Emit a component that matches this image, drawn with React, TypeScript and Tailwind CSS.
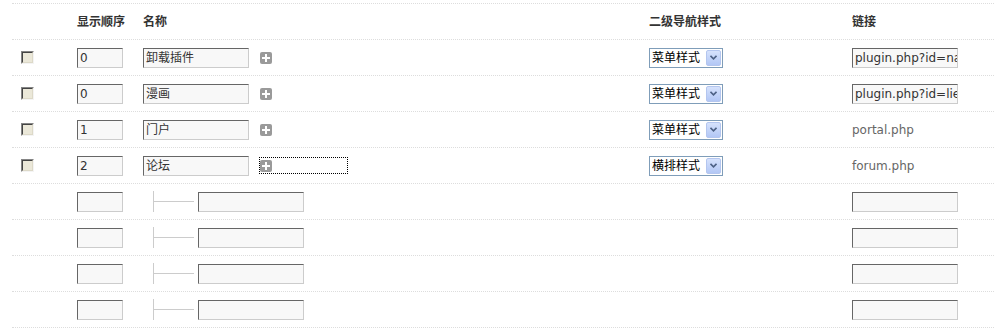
const font = "font-['DejaVu_Sans','Noto_Sans_CJK_SC',sans-serif]";

type Item = { order: string; name: string; style: string; link: string; editable: boolean; focus?: boolean };

const items: Item[] = [
  { order: "0", name: "卸载插件", style: "菜单样式", link: "plugin.php?id=nav_manage", editable: true },
  { order: "0", name: "漫画", style: "菜单样式", link: "plugin.php?id=liemanhua", editable: true },
  { order: "1", name: "门户", style: "菜单样式", link: "portal.php", editable: false },
  { order: "2", name: "论坛", style: "横排样式", link: "forum.php", editable: false, focus: true },
];

const cols = "grid grid-cols-[65px_66px_506px_203px_1fr] items-center";

function Field({ value = "", w }: { value?: string; w: string }) {
  return (
    <div
      className={`${w} h-[20px] overflow-hidden whitespace-nowrap border border-t-[#666] border-l-[#666] border-b-[#ccc] border-r-[#ccc] bg-[#f8f8f8] pl-[2px] text-[12px] leading-[18px] text-[#333]`}
    >
      {value}
    </div>
  );
}

function Checkbox() {
  return (
    <div className="ml-[9px] size-[13px] border border-t-[#858585] border-l-[#858585] border-b-[#f4f4f4] border-r-[#f4f4f4]">
      <div className="size-full border border-t-[#444] border-l-[#444] border-b-[#ddd9c8] border-r-[#ddd9c8] bg-[#ebe8d9]" />
    </div>
  );
}

function Plus() {
  return (
    <span className="relative inline-block size-[12px] rounded-[2px] bg-[#9a9a9a]">
      <span className="absolute left-[5px] top-[2px] h-[8px] w-[2px] bg-white" />
      <span className="absolute left-[2px] top-[5px] h-[2px] w-[8px] bg-white" />
    </span>
  );
}

function Select({ value }: { value: string }) {
  return (
    <div className="flex h-[20px] w-[74px] items-center border border-[#7f9db9] bg-white pl-[2px] pr-[1px]">
      <span className="flex-1 text-[12px] leading-[18px] text-black">{value}</span>
      <span className="flex h-[16px] w-[15px] items-center justify-center rounded-[2px] border border-[#b4c6ef] bg-gradient-to-b from-[#d6e2fc] to-[#b2c7f5]">
        <svg width="7" height="5" viewBox="0 0 7 5">
          <path d="M0.5 0.8 L3.5 3.8 L6.5 0.8" fill="none" stroke="#4d6185" strokeWidth="1.6" />
        </svg>
      </span>
    </div>
  );
}

export default function App() {
  return (
    <div className={`h-[333px] w-[994px] bg-white ${font}`}>
      <div className="ml-[12px] h-[4px] border-b border-dotted border-[#ddd]" />
      <div className={`${cols} ml-[12px] h-[36px] border-b border-dotted border-[#ddd] text-[12px] font-bold text-[#333]`}>
        <span />
        <span>显示顺序</span>
        <span>名称</span>
        <span>二级导航样式</span>
        <span>链接</span>
      </div>
      {items.map((it, i) => (
        <div key={i} className={`${cols} ml-[12px] h-[36px] border-b border-dotted border-[#ddd]`}>
          <Checkbox />
          <Field value={it.order} w="w-[46px]" />
          <div className="flex items-center gap-[10px]">
            <Field value={it.name} w="w-[106px]" />
            {it.focus ? (
              <span className="flex h-[17px] w-[89px] items-center border border-dotted border-black">
                <Plus />
              </span>
            ) : (
              <span className="flex h-[17px] items-center border border-transparent">
                <Plus />
              </span>
            )}
          </div>
          <Select value={it.style} />
          {it.editable ? (
            <Field value={it.link} w="w-[106px]" />
          ) : (
            <span className="text-[12px] text-[#666]">{it.link}</span>
          )}
        </div>
      ))}
      {[0, 1, 2, 3].map((i) => (
        <div key={i} className={`${cols} ml-[12px] h-[36px] border-b border-dotted border-[#ddd]`}>
          <span />
          <Field w="w-[46px]" />
          <div className="flex items-center pl-[10px]">
            <div className="relative h-[21px] w-[40px] border-l border-[#ccc]">
              <div className="absolute left-0 top-[10px] h-px w-[40px] bg-[#ccc]" />
            </div>
            <div className="ml-[5px]">
              <Field w="w-[106px]" />
            </div>
          </div>
          <span />
          <Field w="w-[106px]" />
        </div>
      ))}
    </div>
  );
}
